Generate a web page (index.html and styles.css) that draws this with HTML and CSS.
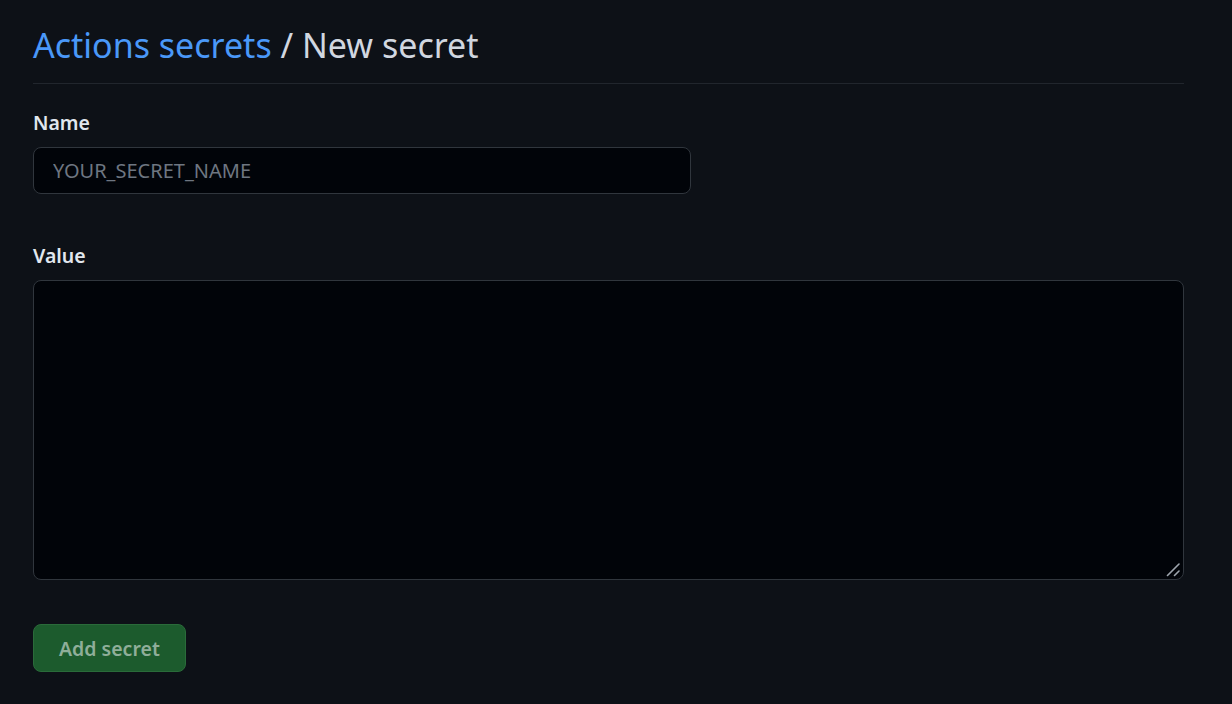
FILE: index.html
```html
<!DOCTYPE html>
<html lang="en">
<head>
<meta charset="utf-8">
<title>New secret</title>
<link rel="stylesheet" href="styles.css">
</head>
<body>
<main class="page">
  <div class="subhead">
    <h2 class="subhead-heading"><a class="crumb" href="#">Actions secrets</a> / New secret</h2>
  </div>
  <form class="secret-form">
    <div class="form-group">
      <label class="form-label" for="secret_name">Name</label>
      <input class="form-input" id="secret_name" type="text" placeholder="YOUR_SECRET_NAME">
    </div>
    <div class="form-group">
      <label class="form-label" for="secret_value">Value</label>
      <div class="textarea-wrap">
        <textarea class="form-textarea" id="secret_value"></textarea>
        <svg class="resize-handle" width="14" height="14" viewBox="0 0 14 14" aria-hidden="true">
          <line x1="13" y1="1" x2="1.5" y2="12.5" />
          <line x1="13" y1="8" x2="8.5" y2="12.5" />
        </svg>
      </div>
    </div>
    <button class="btn-primary" type="button" disabled>Add secret</button>
  </form>
</main>
</body>
</html>
```

FILE: styles.css
```css
html, body {
  margin: 0;
  padding: 0;
  background: #0d1117;
}
body {
  font-family: "Noto Sans", "Segoe UI", "Liberation Sans", sans-serif;
  color: #e6edf3;
}
.page {
  width: 1151px;
  padding: 22px 0 0 33px;
  box-sizing: content-box;
}
.subhead {
  border-bottom: 1px solid #21262d;
  padding-bottom: 14px;
}
.subhead-heading {
  margin: 0;
  font-size: 34px;
  font-weight: 400;
  line-height: 47px;
  color: #d1d7e0;
}
.crumb {
  color: #4a98f8;
  text-decoration: none;
}
.secret-form {
  display: flex;
  flex-direction: column;
  align-items: flex-start;
  padding-top: 28px;
}
.form-group {
  display: flex;
  flex-direction: column;
  width: 100%;
  margin-bottom: 51px;
}
.form-group + .form-group {
  margin-bottom: 44px;
}
.form-label {
  font-size: 19.5px;
  font-weight: 600;
  line-height: 22px;
  color: #e1e7ee;
  margin-bottom: 13px;
}
.form-input {
  width: 658px;
  height: 47px;
  box-sizing: border-box;
  background: #010409;
  border: 1px solid #30363d;
  border-radius: 8px;
  padding: 0 19px;
  font-family: inherit;
  font-size: 20px;
  color: #e6edf3;
  outline: none;
}
.form-input::placeholder {
  color: #6e7681;
}
.textarea-wrap {
  position: relative;
  display: flex;
}
.form-textarea {
  width: 100%;
  height: 300px;
  box-sizing: border-box;
  background: #010409;
  border: 1px solid #30363d;
  border-radius: 8px;
  padding: 10px 19px;
  font-family: inherit;
  font-size: 20px;
  color: #e6edf3;
  outline: none;
  resize: none;
}
.resize-handle {
  position: absolute;
  right: 4px;
  bottom: 3px;
  pointer-events: none;
}
.resize-handle line {
  stroke: #9da5ad;
  stroke-width: 1.6;
  stroke-linecap: round;
}
.btn-primary {
  height: 48px;
  padding: 0 25px;
  background: #1c5b2d;
  border: 1px solid #2a6b3a;
  border-radius: 8px;
  font-family: inherit;
  font-size: 19.5px;
  font-weight: 600;
  color: #8fae99;
  cursor: not-allowed;
}
```
